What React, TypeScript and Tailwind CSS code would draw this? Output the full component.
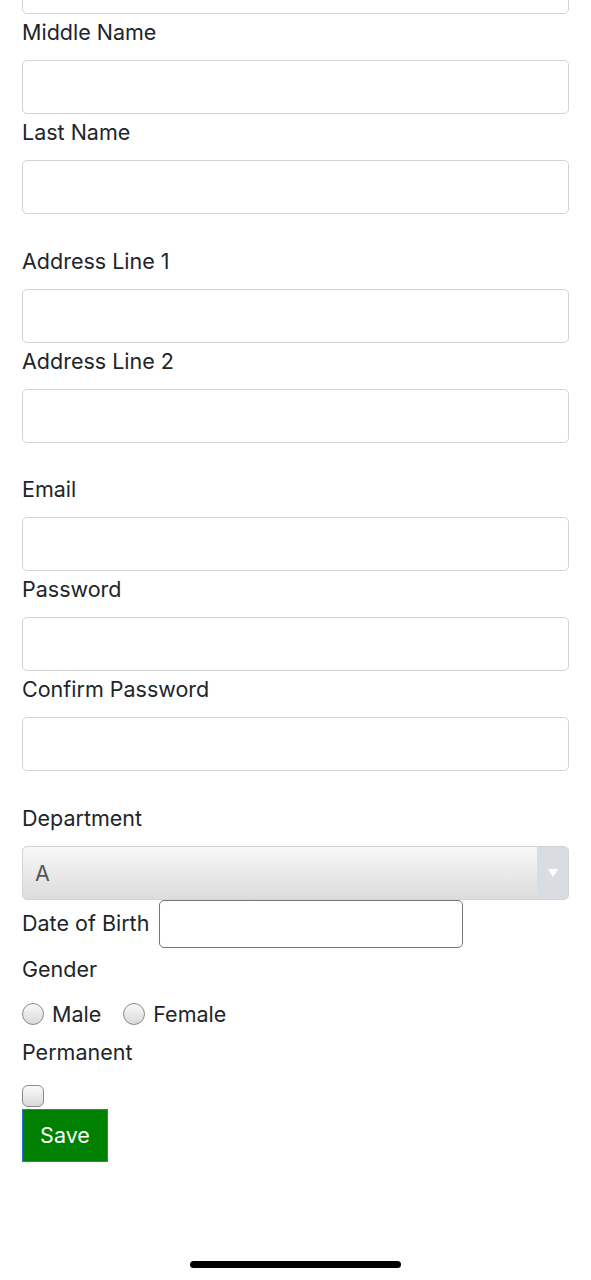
import React from 'react';

const font = { fontFamily: 'Inter, "Liberation Sans", sans-serif' };

const Label: React.FC<{ children: React.ReactNode; gap?: string }> = ({ children, gap }) => (
  <div className={`${gap ?? 'pt-[3px]'} pb-[13px] leading-[30px]`}>{children}</div>
);

const TextBox: React.FC = () => (
  <div className="h-[54px] w-full rounded-[5px] border border-[#ced4da] bg-white" />
);

const Field: React.FC<{ label: string; gap?: string }> = ({ label, gap }) => (
  <div>
    <Label gap={gap}>{label}</Label>
    <TextBox />
  </div>
);

const Radio: React.FC<{ label: string }> = ({ label }) => (
  <div className="flex items-center gap-[8px]">
    <span className="h-[22px] w-[22px] rounded-full border border-[#8a8a8a] bg-gradient-to-b from-[#fafafa] to-[#d9d9d9]" />
    <span className="leading-[22px]">{label}</span>
  </div>
);

export default function App() {
  return (
    <div className="min-h-[1280px] bg-white px-[22px] text-[21.5px] text-[#212529]" style={font}>
      <div className="flex h-[14px] items-end overflow-hidden">
        <div className="h-[54px] w-full shrink-0 rounded-[5px] border border-[#ced4da]" />
      </div>

      <Field label="Middle Name" />
      <Field label="Last Name" />

      <Field label="Address Line 1" gap="pt-[32px]" />
      <Field label="Address Line 2" />

      <Field label="Email" gap="pt-[31px]" />
      <Field label="Password" />
      <Field label="Confirm Password" />

      <Label gap="pt-[32px]">Department</Label>
      <div className="flex h-[54px] w-full overflow-hidden rounded-[5px] border border-[#ced4da] bg-gradient-to-b from-[#f8f8f8] to-[#dcdcdc]">
        <div className="flex flex-1 items-center pl-[12px] text-[#555]">A</div>
        <div className="flex w-[31px] items-center justify-center bg-[#d9dde2]">
          <svg width="10" height="8" viewBox="0 0 10 8">
            <path d="M0 0 L10 0 L5 8 Z" fill="#fff" />
          </svg>
        </div>
      </div>

      <div className="flex h-[54px] items-start gap-[10px]">
        <span className="leading-[46px]">Date of Birth</span>
        <div className="h-[48px] w-[304px] rounded-[5px] border border-[#767676] bg-white" />
      </div>

      <div className="leading-[30px]">Gender</div>
      <div className="flex h-[53px] items-start gap-[22px] pt-[19px]">
        <Radio label="Male" />
        <Radio label="Female" />
      </div>
      <div className="leading-[30px]">Permanent</div>
      <div className="pt-[18px]">
        <div className="h-[22px] w-[22px] rounded-[6px] border border-[#8a8a8a] bg-gradient-to-b from-[#fafafa] to-[#d9d9d9]" />
      </div>
      <button className="mt-[2px] h-[53px] w-[86px] border border-solid border-[#2a77d4] bg-[#008000] text-[21.5px] text-white">
        Save
      </button>

      <div className="flex justify-center pt-[99px]">
        <div className="h-[7px] w-[211px] rounded-full bg-black" />
      </div>
    </div>
  );
}
